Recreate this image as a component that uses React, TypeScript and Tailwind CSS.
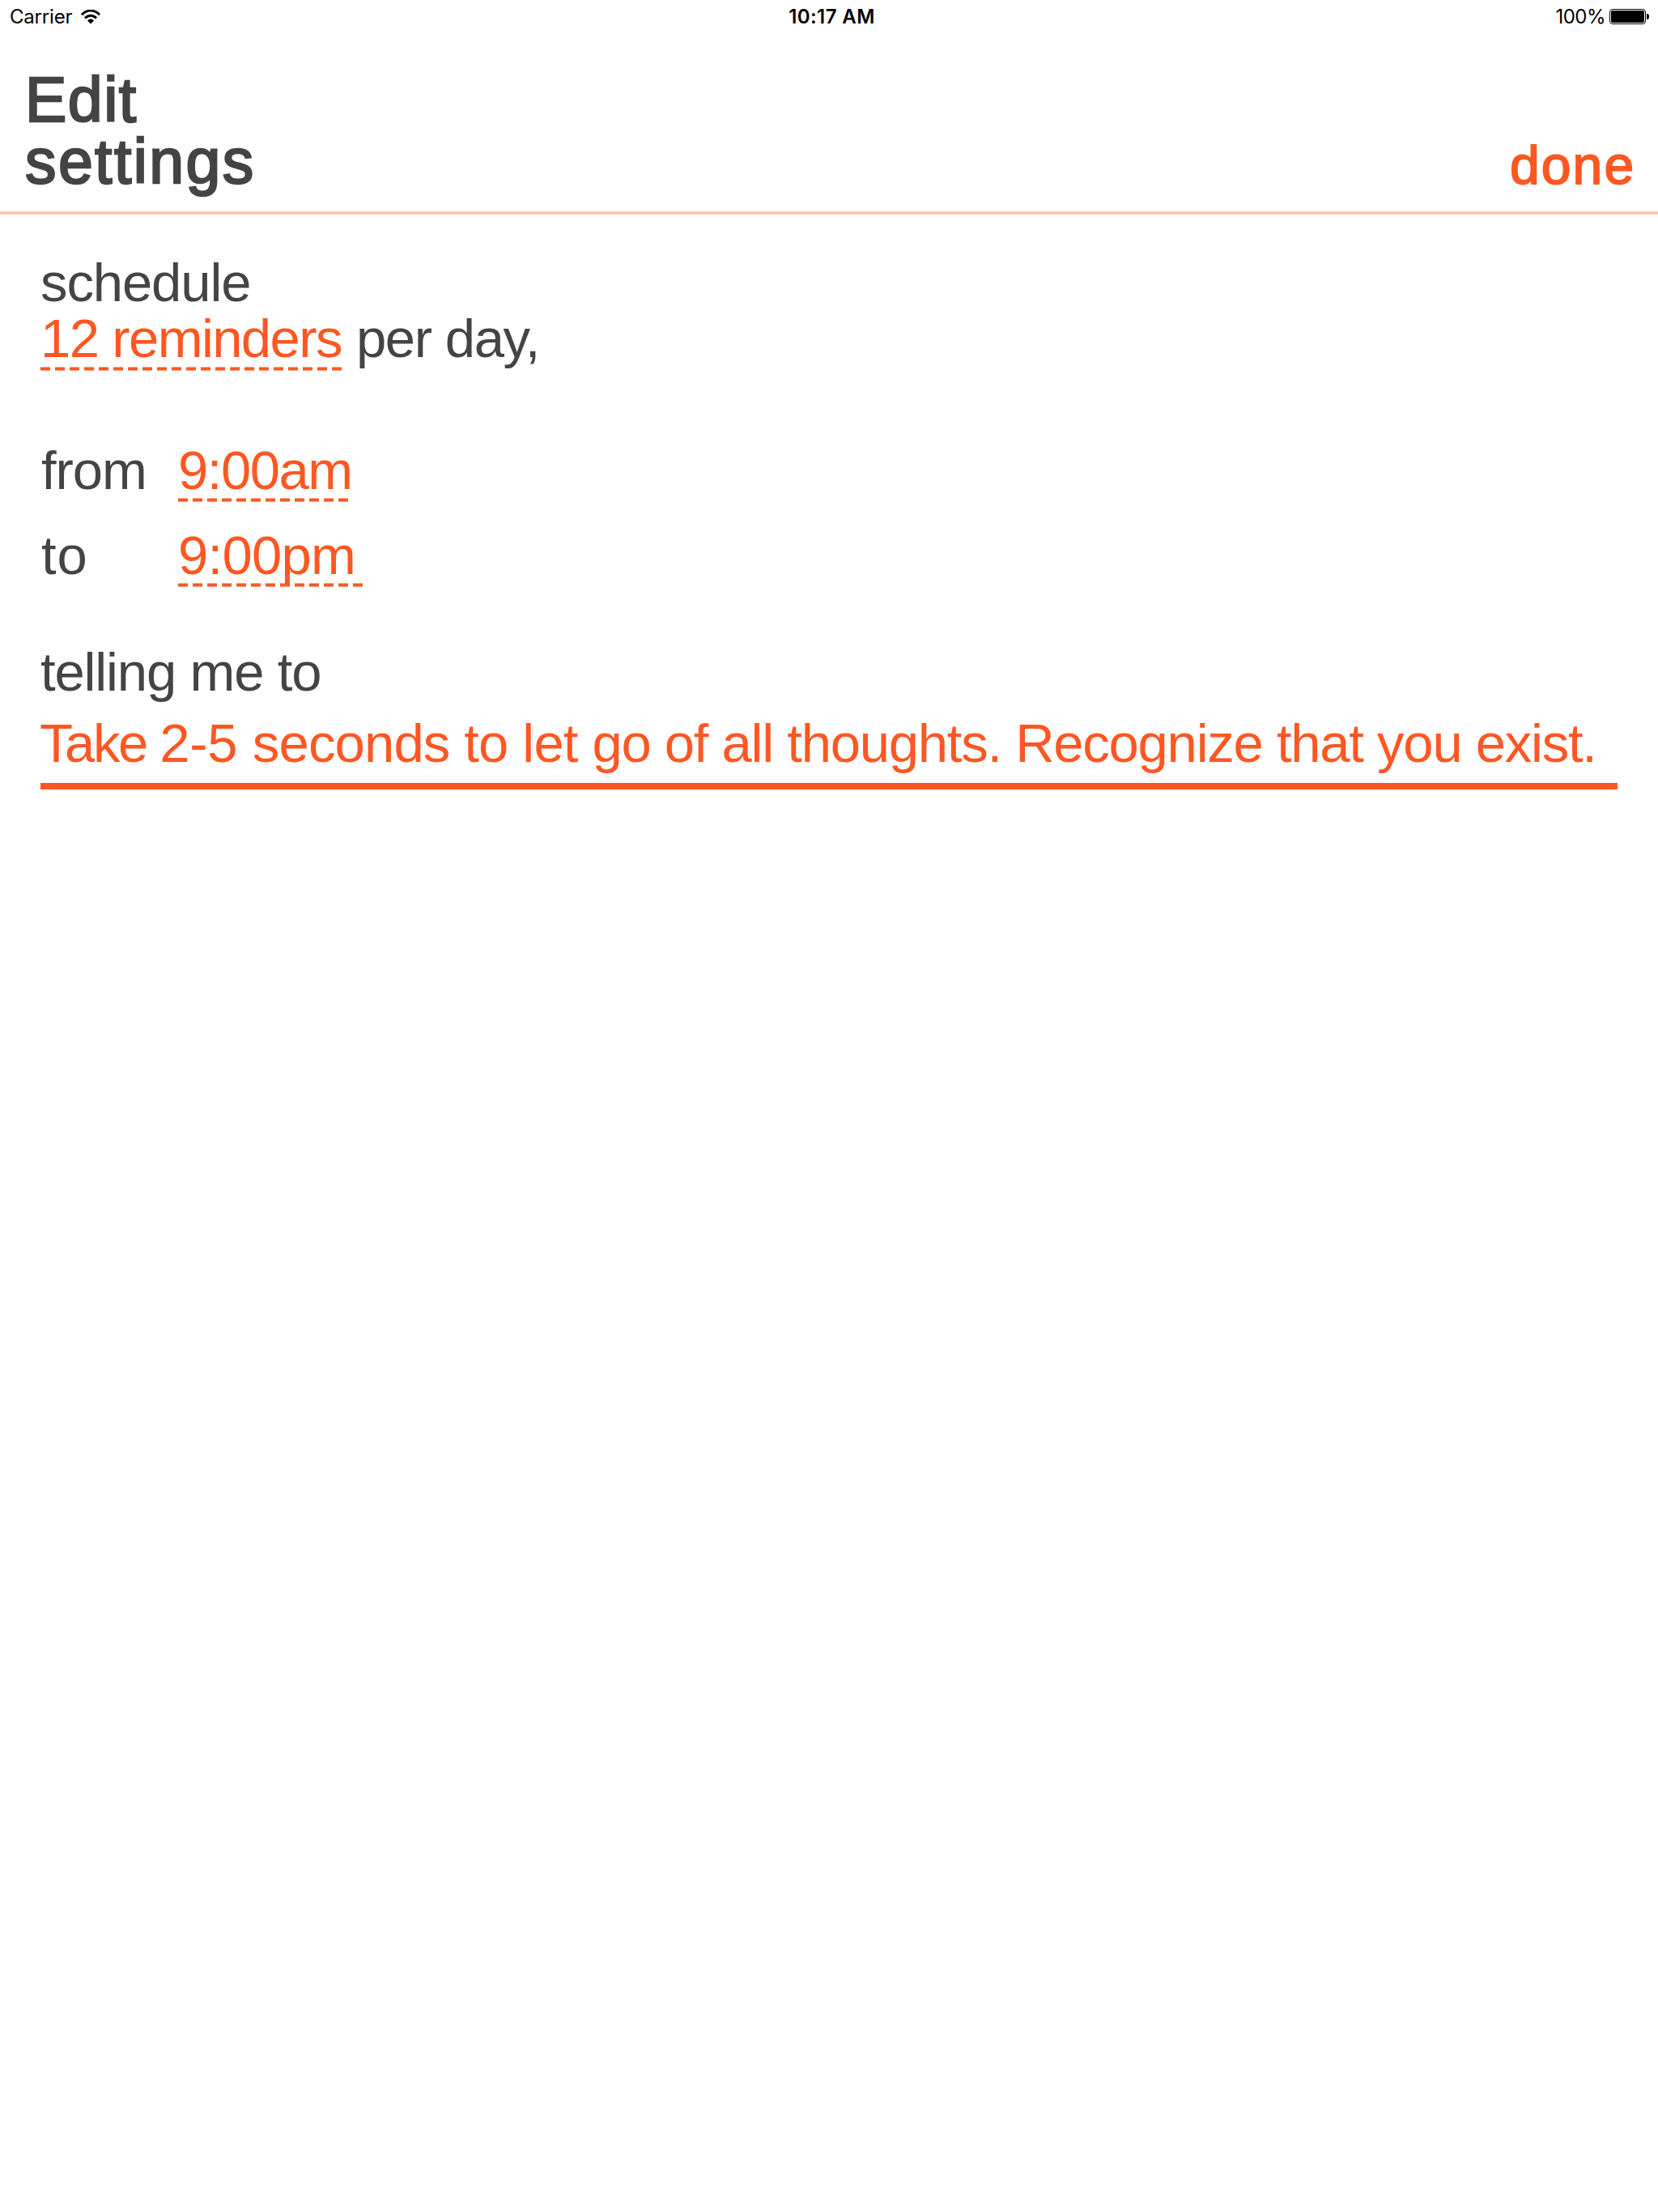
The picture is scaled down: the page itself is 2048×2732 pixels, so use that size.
function Dashes({ className }: { className: string }) {
  return (
    <span
      className={`absolute left-0 h-[5px] bg-[repeating-linear-gradient(90deg,#ff5722_0_12px,transparent_12px_18px)] [mask-image:linear-gradient(#0008_1px,#000_1px_4px,#0008_4px)] ${className}`}
    />
  );
}

function StatusBar() {
  return (
    <div className="grid h-10 grid-cols-3 items-center font-['Inter',sans-serif] text-[24px] leading-[40px] text-black">
      <div className="flex items-center pl-3">
        <span className="tracking-[-0.2px]">Carrier</span>
        <svg className="ml-[11px] h-[18px] w-[24px]" viewBox="0 0 24 18" fill="none">
          <path d="M1 6.2C7.3-.6 16.7-.6 23 6.2" stroke="black" strokeWidth="3" />
          <path d="M5 10.4c4-4.3 10-4.3 14 0" stroke="black" strokeWidth="3" />
          <path d="M8 13.4c2.4-2.4 5.6-2.4 8 0l-4 4.2z" fill="black" />
        </svg>
      </div>
      <div className="pl-[7px] pt-px text-center font-semibold tracking-[0.41px]">10:17 AM</div>
      <div className="flex items-center justify-end pr-[11px]">
        <span className="mr-[5px] pt-px tracking-[-0.5px]">100%</span>
        <span className="flex h-[19px] w-[45px] rounded-[4px] border border-black p-px">
          <span className="flex-1 rounded-[2px] bg-black" />
        </span>
        <span className="ml-px h-[7px] w-[3px] rounded-r-full bg-black" />
      </div>
    </div>
  );
}

export default function App() {
  return (
    <div className="min-h-[2732px] w-[2048px] bg-white font-['Liberation_Sans',Arial,sans-serif] text-[67px] leading-[69px] text-[#444444]">
      <StatusBar />

      <header className="flex items-end justify-between border-b-4 border-[#ffc6b6] pt-[45px] pb-6 pl-[31px]">
        <h1 className="text-[77px] leading-[76px] [-webkit-text-stroke:2.4px_#444444]">
          <span className="block tracking-[1.5px]">Edit</span>
          <span className="block tracking-[2.4px]">settings</span>
        </h1>
        <button className="-mb-px w-[183px] text-left text-[66px] leading-[68px] tracking-[2.1px] text-[#ff5722] [-webkit-text-stroke:1.8px_#ff5722]">
          done
        </button>
      </header>

      <main className="px-[50px]">
        <p className="pt-[49px] tracking-[-1.1px]">schedule</p>
        <div className="flex">
          <span className="relative w-[390px] tracking-[-1.6px] text-[#ff5722]">
            12 reminders
            <Dashes className="top-[70px] w-[372px]" />
          </span>
          <span className="tracking-[-1.4px]">per day,</span>
        </div>

        <div className="mt-[94px] flex">
          <span className="w-[170px] pl-px tracking-[-1.06px]">from</span>
          <span className="relative tracking-[-1.5px] text-[#ff5722]">
            9:00am
            <Dashes className="top-[69px] w-[210px]" />
          </span>
        </div>
        <div className="mt-[36px] flex">
          <span className="w-[170px] pl-px tracking-[1px]">to</span>
          <span className="relative tracking-[-0.75px] text-[#ff5722]">
            9:00pm
            <Dashes className="top-[69px] w-[228px]" />
          </span>
        </div>

        <p className="mt-[75px] tracking-[-1.15px]">telling me to</p>
        <div className="mt-[19px] border-b-8 border-[#ff5722] pb-[15px] whitespace-nowrap text-[#ff5722]">
          <p className="-ml-px tracking-[-1.24px]">
            <span className="tracking-[-2.4px]">Take </span>
            <span className="tracking-[-0.2px]">2-5 </span>
            <span className="tracking-[-0.83px]">seconds to let </span>
            go of all thoughts. Recognize that you exist.
          </p>
        </div>
      </main>
    </div>
  );
}
